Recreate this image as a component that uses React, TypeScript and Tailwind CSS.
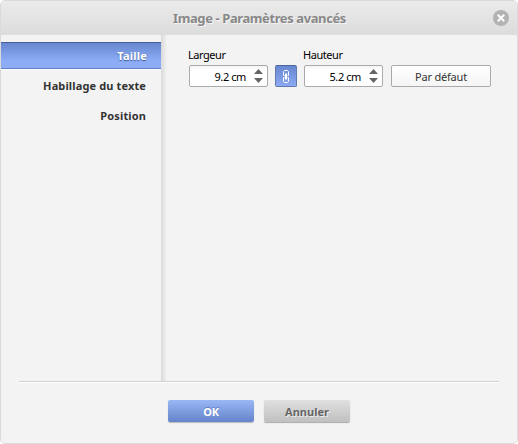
import type { ReactNode } from "react";

function Spinner({ label, value }: { label: string; value: string }) {
  return (
    <div className="w-[79px]">
      <div className="-ml-px h-[17px] whitespace-nowrap leading-[14px] tracking-[-0.45px] text-black">{label}</div>
      <div className="flex h-[22px] rounded-[2px] border border-[#aaa] bg-white bg-linear-to-b from-[#f4f4f4] to-white to-20%">
        <div className="w-[56px] whitespace-pre text-right leading-[22px] tracking-[-0.4px] text-black">{value}</div>
        <svg className="ml-[8px] mt-[3px]" width="9" height="14" viewBox="0 0 9 14" fill="#666">
          <path d="M4.5 0 9 5H0zM0 9h9l-4.5 5z" />
        </svg>
      </div>
    </div>
  );
}

function Tab({ children }: { children: ReactNode }) {
  return <div className="h-[30px] pr-[15px] text-right font-bold leading-[30px] tracking-[0.13px] text-[#333]">{children}</div>;
}

export default function App() {
  return (
    <div className="h-[444px] w-[518px] bg-white font-['Noto_Sans','Open_Sans',sans-serif] text-[11px]">
      <div className="flex h-[444px] w-[518px] flex-col overflow-hidden rounded-[5px] border border-[#dadada] bg-[#f3f3f3]">
        <header className="flex h-[34px] shrink-0 items-center bg-linear-to-b from-[#ebebeb] to-[#dcdcdc] pl-[171px]">
          <h1 className="w-[321px] whitespace-nowrap pl-px text-[13px] font-bold leading-[34px] tracking-[-0.4px] text-[#888] [text-shadow:1px_1px_0_#f5f5f5]">
            Image - Paramètres avancés
          </h1>
          <svg width="16" height="16" viewBox="0 0 16 16">
            <circle cx="8" cy="8" r="8" fill="#b3b3b3" />
            <path d="m4.8 4.8 6.4 6.4m0-6.4-6.4 6.4" stroke="#fff" strokeWidth="2" />
          </svg>
        </header>
        <main className="flex h-[346px] shrink-0">
          <nav className="w-[160px] pt-[7px]">
            <div className="mb-[2px] h-[27px] border-b border-t border-b-[#6384cc] border-t-[#465f99] bg-linear-to-b from-[#6686cf] to-[#8cacf5] to-70% pr-[14px] text-right font-bold leading-[26px] tracking-[0.2px] text-white shadow-[0_1px_0_#fff] [text-shadow:0_1px_1px_#405b9a]">
              Taille
            </div>
            <Tab>Habillage du texte</Tab>
            <Tab>Position</Tab>
          </nav>
          <div className="w-[6px] bg-linear-to-r from-[#d9d9d9] to-[#f3f3f3]" />
          <section className="flex items-end self-start pl-[22px] pt-[13px]">
            <Spinner label="Largeur" value="9.2 cm" />
            <button className="ml-[7px] flex h-[22px] w-[22px] items-center justify-center rounded-[2px] border border-[#6079ae] border-t-[#4d659c] bg-linear-to-b from-[#6787d0] to-[#8caaf3]">
              <svg width="6" height="13" viewBox="0 0 6 13" fill="none" stroke="#fff">
                <path d="M1.5 5.5h-1v-4l1-1h3l1 1v4h-1M1.5 7.5h-1v4l1 1h3l1-1v-4h-1" />
                <path d="M3 3.5v6" strokeWidth="2" />
              </svg>
            </button>
            <div className="ml-[7px]"><Spinner label="Hauteur" value="5.2 cm" /></div>
            <button className="ml-[8px] h-[22px] w-[100px] rounded-[2px] border border-[#aaa] bg-linear-to-b from-white to-[#f5f5f5] pt-px leading-[20px] tracking-[-0.2px] text-[#333]">
              Par défaut
            </button>
          </section>
        </main>
        <footer className="mx-[18px] flex gap-[10px] border-t border-[#d0d0d0] pl-[149px] pt-[18px] shadow-[inset_0_1px_0_#fff]">
          <button className="h-[22px] w-[86px] rounded-[2px] bg-linear-to-b from-[#9ab7f5] to-[#6484cb] pt-px font-bold leading-[22px] tracking-[-0.2px] text-white shadow-[0_1px_1px_#bbb] [text-shadow:0_-1px_0_#6480bd]">OK</button>
          <button className="h-[22px] w-[86px] rounded-[2px] bg-linear-to-b from-[#e0e0e0] to-[#c0c0c0] pt-px font-bold leading-[22px] text-[#666] shadow-[0_1px_1px_#aaa] [text-shadow:1px_1px_0_#eee]">Annuler</button>
        </footer>
      </div>
    </div>
  );
}
